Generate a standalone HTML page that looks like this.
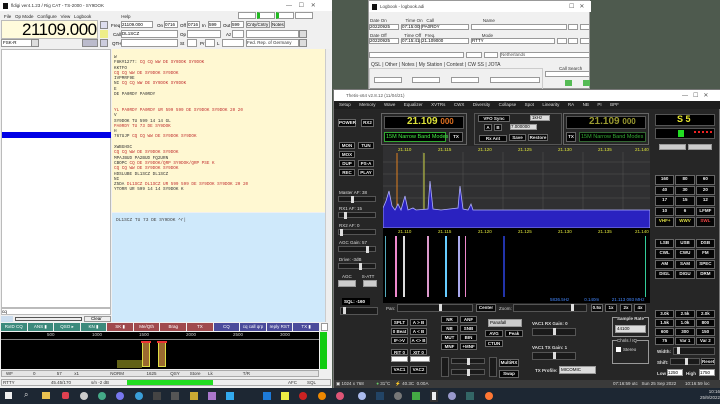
<!DOCTYPE html>
<html><head><meta charset="utf-8">
<style>
*{margin:0;padding:0;box-sizing:border-box}
body{width:720px;height:404px;overflow:hidden;background:#4e5a4e;font-family:"Liberation Sans",sans-serif;position:relative}
.a{position:absolute}
.t{font-size:4.5px;white-space:nowrap}
.f{position:absolute;background:#fff;border:1px solid #999}
.b{position:absolute;background:#050505;border:1px solid #666;color:#eee;font-size:4.5px;font-weight:bold;text-align:center;line-height:6px}
.sl{position:absolute;background:#1a1a1a;border:1px solid #555;height:6px}
.sl i{position:absolute;top:-1px;width:3px;height:7px;background:#ddd}
.rx div{height:5.3px;line-height:5.3px;font-size:4.3px;white-space:nowrap;font-family:"Liberation Mono",monospace}
.r{color:#c03030}
.mac{position:absolute;top:323px;left:1px;width:318px;height:8px;display:flex;gap:1px}
.mac div{flex:1;color:#fff;font-size:4.5px;line-height:8px;text-align:center;white-space:nowrap}
.g{background:#3c8a7c}.rd{background:#a04a4e}.bl{background:#4b4b9b}
</style></head><body>

<!-- fldigi window -->
<div class="a" style="left:0;top:0;width:332px;height:388px;background:#f0f0f0">
 <div class="a" style="left:0;top:0;width:332px;height:11px;background:#fff"></div>
 <div class="a" style="left:3px;top:3px;width:5px;height:6px;background:#111"></div>
 <div class="a t" style="left:11px;top:3px;color:#333">fldigi ver4.1.23 / Rig CAT - TS-2000 - SY9DOK</div>
 <div class="a t" style="left:286px;top:2px;font-size:6px;color:#555">—&nbsp;&nbsp;&nbsp;&nbsp;☐&nbsp;&nbsp;&nbsp;&nbsp;✕</div>
 <div class="a t" style="left:4px;top:14px;color:#222">File&nbsp;&nbsp;&nbsp;Op Mode&nbsp;&nbsp;&nbsp;Configure&nbsp;&nbsp;&nbsp;View&nbsp;&nbsp;&nbsp;Logbook&nbsp;&nbsp;&nbsp;&nbsp;&nbsp;&nbsp;&nbsp;&nbsp;&nbsp;&nbsp;&nbsp;&nbsp;&nbsp;&nbsp;&nbsp;&nbsp;&nbsp;&nbsp;&nbsp;&nbsp;&nbsp;&nbsp;&nbsp;&nbsp;Help</div>
 <div class="f" style="left:238px;top:12px;width:18px;height:7px"></div>
 <div class="f" style="left:257px;top:12px;width:18px;height:7px;border-left:3px solid #2b2"></div>
 <div class="f" style="left:276px;top:12px;width:18px;height:7px;border-left:3px solid #2b2"></div>
 <div class="f" style="left:295px;top:12px;width:18px;height:7px"></div>
 <div class="a" style="left:1px;top:20px;width:97px;height:19px;background:#fffbdc;border:1px solid #bbb"></div>
 <div class="a" style="left:22px;top:20px;font-size:17px;color:#000;letter-spacing:-0.5px">21109.000</div>
 <div class="f" style="left:1px;top:39px;width:38px;height:8px"></div><div class="a t" style="left:3px;top:40px">FSK-R</div>
 <div class="a" style="left:31px;top:39px;width:8px;height:8px;background:#ddd;border:1px solid #888"></div>
 <div class="a" style="left:100px;top:21px;width:8px;height:8px;background:#dde;border:1px solid #888"></div>
 <div class="a" style="left:100px;top:30px;width:8px;height:8px;background:#ee8"></div>
 <div class="a" style="left:100px;top:39px;width:8px;height:8px;background:#ccd;border:1px solid #888"></div>
 <div class="a" style="left:82px;top:39px;width:16px;height:8px;background:#bbc;border:1px solid #888"></div>
 <div class="a t" style="left:111px;top:23px">Freq</div><div class="f" style="left:121px;top:21px;width:32px;height:7px"></div><div class="a t" style="left:122px;top:22px">21109.000</div>
 <div class="a t" style="left:157px;top:23px">On</div><div class="f" style="left:164px;top:21px;width:14px;height:7px"></div><div class="a t" style="left:165px;top:22px">0716</div>
 <div class="a t" style="left:180px;top:23px">Off</div><div class="f" style="left:187px;top:21px;width:13px;height:7px"></div><div class="a t" style="left:188px;top:22px">0716</div>
 <div class="a t" style="left:202px;top:23px">In</div><div class="f" style="left:208px;top:21px;width:13px;height:7px"></div><div class="a t" style="left:209px;top:22px">599</div>
 <div class="a t" style="left:223px;top:23px">Out</div><div class="f" style="left:231px;top:21px;width:13px;height:7px"></div><div class="a t" style="left:232px;top:22px">599</div>
 <div class="f" style="left:246px;top:21px;width:24px;height:7px;background:#eee"></div><div class="a t" style="left:247px;top:22px">Cnty/Cntry</div>
 <div class="f" style="left:271px;top:21px;width:14px;height:7px;background:#eee"></div><div class="a t" style="left:272px;top:22px">Notes</div>
 <div class="a t" style="left:113px;top:32px">Call</div><div class="f" style="left:121px;top:30px;width:57px;height:8px"></div><div class="a t" style="left:122px;top:31px">DL1SCZ</div>
 <div class="a t" style="left:180px;top:32px">Op</div><div class="f" style="left:187px;top:30px;width:34px;height:8px"></div>
 <div class="a t" style="left:226px;top:32px">Az</div><div class="f" style="left:232px;top:30px;width:12px;height:8px"></div>
 <div class="f" style="left:246px;top:30px;width:53px;height:8px"></div><div class="a" style="left:299px;top:30px;width:8px;height:8px;background:#ddd;border:1px solid #888"></div>
 <div class="a t" style="left:112px;top:41px">QTH</div><div class="f" style="left:121px;top:39px;width:57px;height:8px"></div>
 <div class="a t" style="left:180px;top:41px">St</div><div class="f" style="left:187px;top:39px;width:10px;height:8px"></div>
 <div class="a t" style="left:200px;top:41px">Pr</div><div class="f" style="left:205px;top:39px;width:10px;height:8px"></div>
 <div class="a t" style="left:217px;top:41px">L</div><div class="f" style="left:222px;top:39px;width:22px;height:8px"></div>
 <div class="f" style="left:246px;top:39px;width:53px;height:8px"></div><div class="a t" style="left:247px;top:40px;color:#333">Fed. Rep. of Germany</div><div class="a" style="left:299px;top:39px;width:8px;height:8px;background:#ddd;border:1px solid #888"></div>
 <!-- left panel -->
 <div class="a" style="left:1px;top:49px;width:110px;height:259px;background:#fff;border:1px solid #bbb"></div>
 <div class="a" style="left:2px;top:132px;width:109px;height:6px;background:#0000e6"></div>
 <div class="a" style="left:1px;top:308px;width:110px;height:7px;background:#fff;border:1px solid #bbb"></div><div class="a t" style="left:2px;top:309px">cq</div>
 <div class="a" style="left:1px;top:316px;width:12px;height:6px;background:#cde"></div>
 <div class="a" style="left:15px;top:317px;width:67px;height:4px;background:#eee;border:1px solid #555"></div>
 <div class="f" style="left:84px;top:316px;width:27px;height:6px;background:#eee"></div><div class="a t" style="left:91px;top:316px">Clear</div>
 <!-- RX text -->
 <div class="a rx" style="left:112px;top:49px;width:213px;height:163px;background:#fff8d2;padding:6px 1px 0 2px;color:#333">
  <div>W</div><div>F8K#1277: <span class="r">CQ CQ  WW  DE SY9DOK SY9DOK</span></div><div>KKTFO</div>
  <div class="r"> CQ CQ  WW  DE SY9DOK SY9DOK</div><div>IVPMRF9E</div><div>NI <span class="r">CQ CQ  WW  DE SY9DOK SY9DOK</span></div><div>E</div><div>DE PA0RDY PA0RDY</div><div>&nbsp;</div><div>&nbsp;</div>
  <div class="r">YL  PA0RDY  PA0RDY UR 599 599  DE SY9DOK SY9DOK 20 20</div><div>V</div><div>SY9DOK TU 599 14 14 GL</div><div class="r"> PA0RDY TU 73 DE SY9DOK</div><div>H</div>
  <div>767UJP  <span class="r">CQ CQ  WW  DE SY9DOK SY9DOK</span></div><div>&nbsp;</div><div>XWBGHSC</div><div class="r"> CQ CQ  WW  DE SY9DOK SY9DOK</div><div>MPAJBUD PA2BUD FQ2URN</div>
  <div>CBOPC <span class="r">CQ DE SY9DOK/QRP SY9DOK/QRP  PSE K</span></div><div class="r"> CQ CQ  WW  DE SY9DOK SY9DOK</div><div>HDSLUBE DL1SCZ DL1SCZ</div><div>NI</div>
  <div>Z5DA  <span class="r">DL1SCZ  DL1SCZ UR 599 599  DE SY9DOK SY9DOK 20 20</span></div><div>YTORR UR 599 14 14  SY9DOK K</div>
 </div>
 <div class="a" style="left:112px;top:213px;width:213px;height:109px;background:#cfe9fb"></div>
 <div class="a t" style="left:116px;top:218px;color:#444;font-family:'Liberation Mono',monospace">DL1SCZ TU 73 DE SY9DOK ^r|</div>
 <div class="a" style="left:325px;top:49px;width:6px;height:273px;background:#eee;border-left:1px solid #ccc"></div>
 <!-- macros -->
 <div class="mac">
  <div class="g">RxID CQ</div><div class="g">ANS ▮</div><div class="g">QSO ▸</div><div class="g">KN ▮</div>
  <div class="rd">SK ▮</div><div class="rd">Me/Qth</div><div class="rd">Brag</div><div class="rd">TX</div>
  <div class="bl">CQ</div><div class="bl">cq call qrp</div><div class="bl">reply RST</div><div class="bl">TX ▮</div>
 </div>
 <div class="f" style="left:321px;top:323px;width:7px;height:8px"></div>
 <!-- waterfall -->
 <div class="a" style="left:1px;top:332px;width:318px;height:8px;background:#000;border-bottom:1px solid #888"></div>
 <div class="a t" style="left:47px;top:332px;color:#ccc">500</div>
 <div class="a t" style="left:92px;top:332px;color:#ccc">1000</div>
 <div class="a t" style="left:139px;top:332px;color:#ccc">1500</div>
 <div class="a t" style="left:186px;top:332px;color:#ccc">2000</div>
 <div class="a t" style="left:233px;top:332px;color:#ccc">2500</div>
 <div class="a t" style="left:280px;top:332px;color:#ccc">3000</div>
 <div class="a" style="left:1px;top:340px;width:318px;height:29px;background:#000"></div>
 <div class="a" style="left:117px;top:360px;width:25px;height:8px;background:#8a8a20;opacity:.7"></div>
 <div class="a" style="left:142px;top:342px;width:8px;height:25px;background:#9a6a30;border:1px solid #dd4"></div>
 <div class="a" style="left:158px;top:342px;width:8px;height:25px;background:#9a6a30;border:1px solid #dd4"></div>
 <div class="a" style="left:141px;top:341px;width:10px;height:2px;background:#e33"></div>
 <div class="a" style="left:157px;top:341px;width:10px;height:2px;background:#e33"></div>
 <div class="a" style="left:320px;top:332px;width:7px;height:37px;background:#1c1"></div>
 <div class="a" style="left:1px;top:370px;width:318px;height:7px;background:#e4e4e4;border:1px solid #aaa"></div>
 <div class="a t" style="left:6px;top:371px;color:#333">WF&nbsp;&nbsp;&nbsp;&nbsp;&nbsp;&nbsp;&nbsp;&nbsp;&nbsp;&nbsp;&nbsp;&nbsp;&nbsp;&nbsp;&nbsp;&nbsp;0&nbsp;&nbsp;&nbsp;&nbsp;&nbsp;&nbsp;&nbsp;&nbsp;&nbsp;&nbsp;&nbsp;&nbsp;&nbsp;&nbsp;&nbsp;&nbsp;&nbsp;57&nbsp;&nbsp;&nbsp;&nbsp;&nbsp;&nbsp;&nbsp;&nbsp;&nbsp;&nbsp;x1&nbsp;&nbsp;&nbsp;&nbsp;&nbsp;&nbsp;&nbsp;&nbsp;&nbsp;&nbsp;&nbsp;&nbsp;&nbsp;&nbsp;&nbsp;&nbsp;&nbsp;&nbsp;&nbsp;&nbsp;&nbsp;&nbsp;&nbsp;&nbsp;&nbsp;NORM&nbsp;&nbsp;&nbsp;&nbsp;&nbsp;&nbsp;&nbsp;&nbsp;&nbsp;&nbsp;&nbsp;&nbsp;&nbsp;&nbsp;&nbsp;&nbsp;&nbsp;&nbsp;1625&nbsp;&nbsp;&nbsp;&nbsp;&nbsp;&nbsp;&nbsp;&nbsp;&nbsp;&nbsp;&nbsp;QSY&nbsp;&nbsp;&nbsp;&nbsp;&nbsp;&nbsp;&nbsp;&nbsp;Store&nbsp;&nbsp;&nbsp;&nbsp;&nbsp;&nbsp;Lk&nbsp;&nbsp;&nbsp;&nbsp;&nbsp;&nbsp;&nbsp;&nbsp;&nbsp;&nbsp;&nbsp;&nbsp;&nbsp;&nbsp;&nbsp;&nbsp;&nbsp;&nbsp;&nbsp;&nbsp;&nbsp;&nbsp;&nbsp;&nbsp;T/R</div>
 <div class="a" style="left:1px;top:379px;width:330px;height:7px;background:#eee;border:1px solid #aaa"></div>
 <div class="a t" style="left:3px;top:380px;color:#333">RTTY&nbsp;&nbsp;&nbsp;&nbsp;&nbsp;&nbsp;&nbsp;&nbsp;&nbsp;&nbsp;&nbsp;&nbsp;&nbsp;&nbsp;&nbsp;&nbsp;&nbsp;&nbsp;&nbsp;&nbsp;&nbsp;&nbsp;&nbsp;&nbsp;&nbsp;&nbsp;&nbsp;&nbsp;&nbsp;45.45/170&nbsp;&nbsp;&nbsp;&nbsp;&nbsp;&nbsp;&nbsp;&nbsp;&nbsp;&nbsp;&nbsp;&nbsp;&nbsp;&nbsp;&nbsp;&nbsp;s/n -2 dB</div>
 <div class="a" style="left:127px;top:380px;width:86px;height:5px;background:#2d2"></div>
 <div class="a t" style="left:288px;top:380px;color:#333">AFC&nbsp;&nbsp;&nbsp;&nbsp;&nbsp;&nbsp;&nbsp;&nbsp;SQL</div>
</div>

<!-- Logbook -->
<div class="a" style="left:368px;top:0;width:222px;height:89px;background:#f0f0f0;border:1px solid #999">
 <div class="a" style="left:0;top:0;width:222px;height:11px;background:#fff"></div>
 <div class="a" style="left:3px;top:3px;width:5px;height:6px;background:#111"></div>
 <div class="a t" style="left:11px;top:3px;color:#444">Logbook - logbook.adi</div>
 <div class="a t" style="left:200px;top:2px;font-size:6px;color:#555">☐&nbsp;&nbsp;&nbsp;✕</div>
 <div class="a t" style="left:1px;top:17px;color:#333">Date On&nbsp;&nbsp;&nbsp;&nbsp;&nbsp;&nbsp;&nbsp;&nbsp;&nbsp;&nbsp;&nbsp;&nbsp;&nbsp;&nbsp;&nbsp;Time On&nbsp;&nbsp;&nbsp;Call&nbsp;&nbsp;&nbsp;&nbsp;&nbsp;&nbsp;&nbsp;&nbsp;&nbsp;&nbsp;&nbsp;&nbsp;&nbsp;&nbsp;&nbsp;&nbsp;&nbsp;&nbsp;&nbsp;&nbsp;&nbsp;&nbsp;&nbsp;&nbsp;&nbsp;&nbsp;&nbsp;&nbsp;&nbsp;&nbsp;&nbsp;&nbsp;&nbsp;&nbsp;&nbsp;&nbsp;&nbsp;&nbsp;&nbsp;Name</div>
 <div class="f" style="left:0;top:23px;width:30px;height:6px"></div><div class="a t" style="left:1px;top:23px">20220925</div>
 <div class="f" style="left:32px;top:23px;width:19px;height:6px"></div><div class="a t" style="left:33px;top:23px">07:15:00</div>
 <div class="f" style="left:52px;top:23px;width:48px;height:6px"></div><div class="a t" style="left:53px;top:23px">PA0RDY</div>
 <div class="f" style="left:102px;top:23px;width:96px;height:6px"></div>
 <div class="f" style="left:199px;top:23px;width:10px;height:6px"></div><div class="f" style="left:211px;top:23px;width:10px;height:6px"></div>
 <div class="a t" style="left:1px;top:32px;color:#333">Date Off&nbsp;&nbsp;&nbsp;&nbsp;&nbsp;&nbsp;&nbsp;&nbsp;&nbsp;&nbsp;&nbsp;&nbsp;&nbsp;&nbsp;Time Off&nbsp;&nbsp;&nbsp;Freq.&nbsp;&nbsp;&nbsp;&nbsp;&nbsp;&nbsp;&nbsp;&nbsp;&nbsp;&nbsp;&nbsp;&nbsp;&nbsp;&nbsp;&nbsp;&nbsp;&nbsp;&nbsp;&nbsp;&nbsp;&nbsp;&nbsp;&nbsp;&nbsp;&nbsp;&nbsp;&nbsp;&nbsp;&nbsp;&nbsp;&nbsp;&nbsp;&nbsp;&nbsp;&nbsp;&nbsp;&nbsp;Mode</div>
 <div class="f" style="left:0;top:37px;width:30px;height:6px"></div><div class="a t" style="left:1px;top:37px">20220925</div>
 <div class="f" style="left:32px;top:37px;width:19px;height:6px"></div><div class="a t" style="left:33px;top:37px">07:15:41</div>
 <div class="f" style="left:52px;top:37px;width:48px;height:6px"></div><div class="a t" style="left:53px;top:37px">21.109000</div>
 <div class="f" style="left:102px;top:37px;width:84px;height:6px"></div><div class="a t" style="left:103px;top:37px">RTTY</div>
 <div class="f" style="left:188px;top:37px;width:10px;height:6px"></div><div class="f" style="left:199px;top:37px;width:10px;height:6px"></div><div class="f" style="left:211px;top:37px;width:10px;height:6px"></div>
 <div class="f" style="left:0;top:51px;width:95px;height:6px"></div><div class="f" style="left:97px;top:51px;width:16px;height:6px"></div><div class="f" style="left:115px;top:51px;width:14px;height:6px"></div>
 <div class="f" style="left:131px;top:51px;width:90px;height:6px"></div><div class="a t" style="left:132px;top:51px;color:#555">Netherlands</div>
 <div class="a t" style="left:2px;top:61px;font-size:5px;color:#333">QSL | Other | Notes | My Station | Contest | CW SS | JOTA</div>
 <div class="a" style="left:0;top:67px;width:174px;height:22px;border:1px solid #ccc"></div>
 <div class="f" style="left:5px;top:76px;width:28px;height:6px"></div><div class="f" style="left:43px;top:76px;width:28px;height:6px"></div><div class="f" style="left:82px;top:76px;width:28px;height:6px"></div><div class="f" style="left:121px;top:76px;width:50px;height:6px"></div>
 <div class="a t" style="left:190px;top:65px;color:#333">Call Search</div>
 <div class="f" style="left:176px;top:70px;width:45px;height:6px"></div>
 <div class="a" style="left:196px;top:79px;width:7px;height:6px;background:#5b5"></div><div class="a" style="left:214px;top:79px;width:7px;height:6px;background:#5b5"></div>
</div>

<!-- Thetis -->
<div class="a" style="left:333px;top:89px;width:387px;height:299px;background:#262626;border:1px solid #777">
 <div class="a" style="left:0;top:0;width:387px;height:11px;background:#fff"></div>
 <div class="a t" style="left:12px;top:3px;color:#555">Thetis-x64 v2.8.12 (11/04/21)</div>
 <div class="a t" style="left:348px;top:2px;font-size:6px;color:#555">—&nbsp;&nbsp;&nbsp;☐&nbsp;&nbsp;&nbsp;✕</div>
 <div class="a" style="left:0;top:11px;width:387px;height:8px;background:#1e1e1e"></div>
 <div class="a t" style="left:5px;top:12px;color:#ddd;word-spacing:3px">Setup&nbsp;&nbsp;Memory&nbsp;&nbsp;Wave&nbsp;&nbsp;Equalizer&nbsp;&nbsp;XVTRs&nbsp;&nbsp;CWX&nbsp;&nbsp;Diversity&nbsp;&nbsp;Collapse&nbsp;&nbsp;Spot&nbsp;&nbsp;Linearity&nbsp;&nbsp;RA&nbsp;&nbsp;NB&nbsp;&nbsp;PI&nbsp;&nbsp;BPF</div>
 <!-- VFO A -->
 <div class="a" style="left:47px;top:23px;width:86px;height:32px;border:1px solid #666"></div>
 <div class="a" style="left:50px;top:26px;width:80px;height:13px;background:#000;border:1px solid #555"></div>
 <div class="a" style="left:73px;top:26px;font-size:10px;font-weight:bold;color:#dde23a">21.109 <span style="color:#e07020;font-size:8px">000</span></div>
 <div class="a" style="left:50px;top:42px;width:62px;height:10px;background:#000;border:1px solid #3a3"></div>
 <div class="a t" style="left:52px;top:44px;color:#4e4;font-size:5.5px">15M Narrow Band Modes</div>
 <div class="b" style="left:115px;top:42px;width:14px;height:10px;line-height:8px">TX</div>
 <!-- center -->
 <div class="a" style="left:140px;top:23px;width:88px;height:32px;border:1px solid #555"></div>
 <div class="b" style="left:144px;top:25px;width:32px;height:7px">VFO Sync</div>
 <div class="b" style="left:150px;top:34px;width:8px;height:7px">A</div><div class="b" style="left:160px;top:34px;width:8px;height:7px">B</div>
 <div class="f" style="left:176px;top:34px;width:27px;height:6px;background:#ddd"></div><div class="a t" style="left:177px;top:34px">7.000000</div>
 <div class="f" style="left:196px;top:25px;width:20px;height:6px;background:#ddd"></div><div class="a t" style="left:198px;top:25px">1kHz</div>
 <div class="b" style="left:145px;top:45px;width:28px;height:7px">Rx Ant</div>
 <div class="b" style="left:175px;top:44px;width:17px;height:7px">Save</div><div class="b" style="left:194px;top:44px;width:20px;height:7px">Restore</div>
 <!-- VFO B -->
 <div class="a" style="left:229px;top:23px;width:86px;height:32px;border:1px solid #666"></div>
 <div class="a" style="left:232px;top:26px;width:80px;height:13px;background:#000;border:1px solid #555"></div>
 <div class="a" style="left:255px;top:26px;font-size:10px;font-weight:bold;color:#9a9a30">21.109 <span style="font-size:8px">000</span></div>
 <div class="b" style="left:232px;top:42px;width:10px;height:10px;line-height:8px">TX</div>
 <div class="a" style="left:245px;top:42px;width:67px;height:10px;background:#000;border:1px solid #363"></div>
 <div class="a t" style="left:247px;top:44px;color:#3a3;font-size:5.5px">15M Narrow Band Modes</div>
 <!-- meter -->
 <div class="a" style="left:321px;top:24px;width:60px;height:12px;background:#000;border:1px solid #555"></div>
 <div class="a" style="left:343px;top:24px;font-size:9px;font-weight:bold;color:#e8e830">S 5</div>
 <div class="a" style="left:321px;top:38px;width:60px;height:11px;background:#000;border:1px solid #555"></div>
 <div class="a" style="left:344px;top:40px;width:6px;height:7px;background:#2d2"></div>
 <div class="a" style="left:360px;top:41px;width:18px;height:4px;border-top:2px dotted #e22"></div>
 <div class="f" style="left:325px;top:54px;width:27px;height:6px;background:#ccc"></div><div class="f" style="left:354px;top:54px;width:24px;height:6px;background:#ccc"></div>
 <!-- left buttons -->
 <div class="b" style="left:4px;top:29px;width:18px;height:8px">POWER</div>
 <div class="b" style="left:27px;top:29px;width:13px;height:8px">RX2</div>
 <div class="b" style="left:5px;top:52px;width:16px;height:7px">MON</div><div class="b" style="left:24px;top:52px;width:16px;height:7px">TUN</div>
 <div class="b" style="left:5px;top:61px;width:16px;height:7px">MOX</div>
 <div class="b" style="left:5px;top:70px;width:16px;height:7px">DUP</div><div class="b" style="left:24px;top:70px;width:16px;height:7px">PS-A</div>
 <div class="b" style="left:5px;top:79px;width:16px;height:7px">REC</div><div class="b" style="left:24px;top:79px;width:16px;height:7px">PLAY</div>
 <div class="a t" style="left:5px;top:100px;color:#ddd">Master AF: 38</div><div class="sl" style="left:4px;top:106px;width:38px"><i style="left:12px"></i></div>
 <div class="a t" style="left:5px;top:116px;color:#ddd">RX1 AF: 15</div><div class="sl" style="left:4px;top:122px;width:38px"><i style="left:5px"></i></div>
 <div class="a t" style="left:5px;top:133px;color:#ddd">RX2 AF: 0</div><div class="sl" style="left:4px;top:139px;width:38px"><i style="left:1px"></i></div>
 <div class="a t" style="left:5px;top:150px;color:#ddd">AGC Gain: 57</div><div class="sl" style="left:4px;top:156px;width:38px"><i style="left:27px"></i></div>
 <div class="a t" style="left:5px;top:167px;color:#ddd">Drive: -3dB</div><div class="sl" style="left:4px;top:173px;width:38px"><i style="left:20px"></i></div>
 <div class="a t" style="left:8px;top:184px;color:#ddd">AGC&nbsp;&nbsp;&nbsp;&nbsp;&nbsp;&nbsp;&nbsp;&nbsp;S-ATT</div>
 <div class="f" style="left:4px;top:190px;width:18px;height:7px;background:#ccc"></div><div class="f" style="left:29px;top:190px;width:14px;height:7px;background:#ccc"></div>
 <div class="a" style="left:8px;top:208px;width:28px;height:7px;background:#000"></div><div class="a t" style="left:10px;top:209px;color:#fff;font-weight:bold">SQL: -160</div>
 <div class="sl" style="left:6px;top:217px;width:38px;height:8px"><i style="left:2px"></i></div>
 <!-- spectrum -->
 <svg class="a" style="left:49px;top:56px" width="267" height="82" viewBox="0 0 267 82">
  <rect width="267" height="82" fill="#303032"/>
  <g stroke="#555" stroke-width="0.5">
   <line x1="0" y1="16" x2="267" y2="16"/><line x1="0" y1="28" x2="267" y2="28"/><line x1="0" y1="40" x2="267" y2="40"/><line x1="0" y1="52" x2="267" y2="52"/><line x1="0" y1="64" x2="267" y2="64"/>
   <line x1="40" y1="6" x2="40" y2="82"/><line x1="80" y1="6" x2="80" y2="82"/><line x1="120" y1="6" x2="120" y2="82"/><line x1="160" y1="6" x2="160" y2="82"/><line x1="200" y1="6" x2="200" y2="82"/><line x1="240" y1="6" x2="240" y2="82"/>
  </g>
  <g fill="#dde23a" font-size="4.5" font-family="Liberation Sans"><text x="15" y="5">21.110</text><text x="55" y="5">21.115</text><text x="95" y="5">21.120</text><text x="135" y="5">21.125</text><text x="175" y="5">21.130</text><text x="215" y="5">21.135</text><text x="252" y="5">21.140</text></g>
  <line x1="14" y1="7" x2="14" y2="82" stroke="#e08020"/><line x1="41" y1="7" x2="41" y2="82" stroke="#c8d040"/>
  <path d="M0 62 L3 55 L6 45 L9 60 L12 64 L15 58 L18 64 L22 50 L25 64 L30 62 L33 64 L45 63 L47 35 L50 63 L58 64 L75 62 L77 40 L80 63 L85 64 L88 58 L90 64 L267 64 L267 82 L0 82Z" fill="#2a22c0" stroke="#b0b0ff" stroke-width="0.8"/>
 </svg>
 <div class="a" style="left:49px;top:138px;width:267px;height:8px;background:#000"></div>
 <div class="a t" style="left:64px;top:139px;color:#dde23a">21.110</div>
 <div class="a t" style="left:104px;top:139px;color:#dde23a">21.115</div>
 <div class="a t" style="left:144px;top:139px;color:#dde23a">21.120</div>
 <div class="a t" style="left:184px;top:139px;color:#dde23a">21.125</div>
 <div class="a t" style="left:224px;top:139px;color:#dde23a">21.130</div>
 <div class="a t" style="left:264px;top:139px;color:#dde23a">21.135</div>
 <div class="a t" style="left:301px;top:139px;color:#dde23a">21.140</div>
 <div class="a" style="left:49px;top:146px;width:267px;height:61px;background:#000;background-image:linear-gradient(90deg,transparent 2px,#5ab 2px,#5ab 3px,transparent 3px,transparent 12px,#e8c 12px,#e8c 14px,transparent 14px,transparent 20px,#ddd 20px,#ddd 22px,transparent 22px,transparent 44px,#d9c 44px,#d9c 46px,transparent 46px,transparent 62px,#6cf 62px,#6cf 64px,transparent 64px,transparent 75px,#aae 75px,#aae 77px,transparent 77px,transparent 82px,#e8c 82px,#e8c 83px,transparent 83px,transparent 120px,#23a 120px,#23a 122px,transparent 122px,transparent 262px,#3c9 262px,#3c9 263px,transparent 263px)"></div>
 <div class="a" style="left:49px;top:207px;width:267px;height:6px;background:#000"></div>
 <div class="a t" style="left:216px;top:207px;color:#48f">5836.5Hz&nbsp;&nbsp;&nbsp;&nbsp;&nbsp;&nbsp;&nbsp;&nbsp;&nbsp;&nbsp;&nbsp;&nbsp;0.140m&nbsp;&nbsp;&nbsp;&nbsp;&nbsp;&nbsp;&nbsp;&nbsp;&nbsp;&nbsp;21.113 093 MHz</div>
 <!-- pan zoom -->
 <div class="a t" style="left:52px;top:216px;color:#ccc">Pan:</div><div class="sl" style="left:63px;top:214px;width:76px;height:8px"><i style="left:41px"></i></div>
 <div class="b" style="left:142px;top:214px;width:20px;height:8px">Center</div>
 <div class="a t" style="left:165px;top:216px;color:#ccc">Zoom:</div><div class="sl" style="left:179px;top:214px;width:74px;height:8px"><i style="left:57px"></i></div>
 <div class="b" style="left:257px;top:214px;width:12px;height:8px">0.5x</div><div class="b" style="left:271px;top:214px;width:12px;height:8px">1x</div><div class="b" style="left:286px;top:214px;width:12px;height:8px">2x</div><div class="b" style="left:300px;top:214px;width:12px;height:8px">4x</div>
 <!-- lower controls -->
 <div class="b" style="left:57px;top:229px;width:17px;height:7px">SPLT</div><div class="b" style="left:76px;top:229px;width:17px;height:7px">A &gt; B</div>
 <div class="b" style="left:57px;top:238px;width:17px;height:7px">0 Beat</div><div class="b" style="left:76px;top:238px;width:17px;height:7px">A &lt; B</div>
 <div class="b" style="left:57px;top:247px;width:17px;height:7px">IF-&gt;V</div><div class="b" style="left:76px;top:247px;width:17px;height:7px">A &lt;&gt; B</div>
 <div class="b" style="left:57px;top:259px;width:17px;height:6px">RIT 0</div><div class="b" style="left:76px;top:259px;width:17px;height:6px">XIT 0</div>
 <div class="f" style="left:57px;top:266px;width:17px;height:6px"></div><div class="f" style="left:76px;top:266px;width:20px;height:6px"></div>
 <div class="b" style="left:57px;top:276px;width:17px;height:8px">VAC1</div><div class="b" style="left:76px;top:276px;width:17px;height:8px">VAC2</div>
 <div class="b" style="left:107px;top:226px;width:17px;height:7px">NR</div><div class="b" style="left:126px;top:226px;width:17px;height:7px">ANF</div>
 <div class="b" style="left:107px;top:235px;width:17px;height:7px">NB</div><div class="b" style="left:126px;top:235px;width:17px;height:7px">SNB</div>
 <div class="b" style="left:107px;top:244px;width:17px;height:7px">MUT</div><div class="b" style="left:126px;top:244px;width:17px;height:7px">BIN</div>
 <div class="b" style="left:107px;top:253px;width:17px;height:7px">MNF</div><div class="b" style="left:126px;top:253px;width:17px;height:7px">+MNF</div>
 <div class="sl" style="left:107px;top:267px;width:8px;height:20px"></div>
 <div class="sl" style="left:117px;top:268px;width:34px"><i style="left:15px"></i></div><div class="sl" style="left:117px;top:279px;width:34px"><i style="left:15px"></i></div>
 <div class="sl" style="left:155px;top:267px;width:8px;height:20px"></div>
 <div class="b" style="left:165px;top:269px;width:20px;height:8px">MultiRX</div><div class="b" style="left:165px;top:280px;width:20px;height:8px">Swap</div>
 <div class="f" style="left:154px;top:229px;width:34px;height:8px;background:#ccc"></div><div class="a t" style="left:156px;top:230px">Panafall</div>
 <div class="b" style="left:151px;top:240px;width:18px;height:7px">AVG</div><div class="b" style="left:171px;top:240px;width:18px;height:7px">Peak</div>
 <div class="b" style="left:151px;top:250px;width:18px;height:7px">CTUN</div>
 <div class="a t" style="left:198px;top:231px;color:#ddd;font-weight:bold">VAC1 RX Gain: 0</div><div class="sl" style="left:198px;top:238px;width:44px;height:8px"><i style="left:20px"></i></div>
 <div class="a t" style="left:198px;top:255px;color:#ddd;font-weight:bold">VAC1 TX Gain: 1</div><div class="sl" style="left:198px;top:262px;width:44px;height:8px"><i style="left:20px"></i></div>
 <div class="a t" style="left:201px;top:278px;color:#ddd;font-weight:bold">TX Profile:</div>
 <div class="f" style="left:225px;top:276px;width:37px;height:8px;background:#ddd"></div><div class="a t" style="left:227px;top:277px">MICOMIC</div>
 <div class="a" style="left:278px;top:227px;width:37px;height:20px;border:1px solid #999"></div>
 <div class="a t" style="left:283px;top:226px;color:#ddd;font-weight:bold;background:#262626">Sample Rate</div>
 <div class="f" style="left:281px;top:235px;width:31px;height:8px;background:#ddd"></div><div class="a t" style="left:283px;top:236px">44100</div>
 <div class="a" style="left:278px;top:250px;width:37px;height:24px;border:1px solid #999"></div>
 <div class="a t" style="left:283px;top:248px;color:#ddd;background:#262626">Chnls / IQ</div>
 <div class="a" style="left:282px;top:257px;width:5px;height:5px;background:#fff"></div><div class="a t" style="left:289px;top:257px;color:#ddd">Stereo</div>
 <!-- right band buttons -->
 <div class="a" style="left:321px;top:85px;width:60px;height:52px;display:grid;grid-template-columns:repeat(3,1fr);gap:1px 1px">
  <div class="b" style="position:static">160</div><div class="b" style="position:static">80</div><div class="b" style="position:static">60</div>
  <div class="b" style="position:static">40</div><div class="b" style="position:static">30</div><div class="b" style="position:static">20</div>
  <div class="b" style="position:static">17</div><div class="b" style="position:static">15</div><div class="b" style="position:static">12</div>
  <div class="b" style="position:static">10</div><div class="b" style="position:static">6</div><div class="b" style="position:static">LFMF</div>
  <div class="b" style="position:static;color:#dd4">VHF+</div><div class="b" style="position:static;color:#dd4">WWV</div><div class="b" style="position:static;color:#e44">SWL</div>
 </div>
 <div class="a" style="left:321px;top:149px;width:60px;height:40px;display:grid;grid-template-columns:repeat(3,1fr);gap:1px">
  <div class="b" style="position:static">LSB</div><div class="b" style="position:static">USB</div><div class="b" style="position:static">DSB</div>
  <div class="b" style="position:static">CWL</div><div class="b" style="position:static">CWU</div><div class="b" style="position:static">FM</div>
  <div class="b" style="position:static">AM</div><div class="b" style="position:static">SAM</div><div class="b" style="position:static">SPEC</div>
  <div class="b" style="position:static">DIGL</div><div class="b" style="position:static">DIGU</div><div class="b" style="position:static">DRM</div>
 </div>
 <div class="a" style="left:321px;top:220px;width:60px;height:34px;display:grid;grid-template-columns:repeat(3,1fr);gap:1px">
  <div class="b" style="position:static">3.0k</div><div class="b" style="position:static">2.5k</div><div class="b" style="position:static">2.0k</div>
  <div class="b" style="position:static">1.5k</div><div class="b" style="position:static">1.0k</div><div class="b" style="position:static">800</div>
  <div class="b" style="position:static">600</div><div class="b" style="position:static">300</div><div class="b" style="position:static">150</div>
  <div class="b" style="position:static">75</div><div class="b" style="position:static">Var 1</div><div class="b" style="position:static">Var 2</div>
 </div>
 <div class="a t" style="left:323px;top:259px;color:#ddd;font-weight:bold">Width:</div><div class="sl" style="left:339px;top:257px;width:42px;height:8px"><i style="left:3px"></i></div>
 <div class="a t" style="left:323px;top:270px;color:#ddd;font-weight:bold">Shift:</div><div class="sl" style="left:336px;top:268px;width:30px;height:7px"><i style="left:14px"></i></div>
 <div class="b" style="left:367px;top:268px;width:14px;height:7px">Reset</div>
 <div class="a t" style="left:323px;top:281px;color:#ddd;font-weight:bold">Low</div><div class="f" style="left:333px;top:279px;width:16px;height:7px"></div><div class="a t" style="left:334px;top:280px">1250</div>
 <div class="a t" style="left:352px;top:281px;color:#ddd;font-weight:bold">High</div><div class="f" style="left:365px;top:279px;width:16px;height:7px"></div><div class="a t" style="left:366px;top:280px">1750</div>
 <!-- status -->
 <div class="a" style="left:0;top:290px;width:387px;height:8px;background:#3a3a3a"></div>
 <div class="a t" style="left:2px;top:291px;color:#ddd">▣ 1024 x 768&nbsp;&nbsp;&nbsp;&nbsp;&nbsp;&nbsp;&nbsp;&nbsp;&nbsp;&nbsp;<span style="color:#6c6">●</span> 31°C&nbsp;&nbsp;&nbsp;&nbsp;<span style="color:#dd4">⚡</span> 40.3C&nbsp;&nbsp;0.00A</div>
 <div class="a t" style="left:279px;top:291px;color:#ddd">07:16:59 utc&nbsp;&nbsp;&nbsp;Sun 25 Sep 2022&nbsp;&nbsp;&nbsp;&nbsp;&nbsp;&nbsp;&nbsp;10:16:59 loc</div>
</div>

<!-- taskbar -->
<div class="a" style="left:0;top:388px;width:720px;height:16px;background:#1d2733"></div>
<div class="a" style="left:5px;top:392px;width:7px;height:7px;background:#eee"></div>
<div class="a t" style="left:24px;top:390px;font-size:8px;color:#ddd">⌕</div>
<div class="a" style="left:42px;top:392px;width:8px;height:7px;background:#e8c050"></div>
<div class="a" style="left:62px;top:392px;width:7px;height:7px;background:#e04050;border-radius:2px"></div>
<div class="a" style="left:80px;top:392px;width:8px;height:8px;background:#ccc;border-radius:50%"></div>
<div class="a" style="left:98px;top:392px;width:8px;height:8px;background:#4a8;border-radius:50%"></div>
<div class="a" style="left:116px;top:392px;width:8px;height:8px;background:#77e;border-radius:50%"></div>
<div class="a" style="left:135px;top:392px;width:8px;height:8px;background:#3a9ed8;border-radius:50%"></div>
<div class="a" style="left:153px;top:392px;width:8px;height:8px;background:#444"></div>
<div class="a" style="left:171px;top:392px;width:8px;height:8px;background:#555"></div>
<div class="a" style="left:190px;top:392px;width:8px;height:8px;background:#ca3"></div>
<div class="a" style="left:208px;top:392px;width:8px;height:8px;background:#a7c"></div>
<div class="a" style="left:226px;top:392px;width:8px;height:8px;background:#3ae"></div>
<div class="a" style="left:263px;top:392px;width:8px;height:8px;background:#1d7ad8"></div>
<div class="a" style="left:281px;top:392px;width:8px;height:8px;background:#ee4"></div>
<div class="a" style="left:299px;top:392px;width:8px;height:8px;background:#c22;border-radius:50%"></div>
<div class="a" style="left:318px;top:392px;width:8px;height:8px;background:#e80;border-radius:50%"></div>
<div class="a" style="left:336px;top:392px;width:8px;height:8px;background:#d57;border-radius:50%"></div>
<div class="a" style="left:358px;top:392px;width:8px;height:8px;background:#abe;border-radius:50%"></div>
<div class="a" style="left:376px;top:392px;width:8px;height:8px;background:#246"></div>
<div class="a" style="left:394px;top:392px;width:8px;height:8px;background:#777;border-radius:50%"></div>
<div class="a" style="left:412px;top:392px;width:8px;height:8px;background:#4a4"></div>
<div class="a" style="left:430px;top:390px;width:8px;height:12px;background:#eee;border:2px solid #333"></div>
<div class="a" style="left:448px;top:392px;width:8px;height:8px;background:#99c;border-radius:50%"></div>
<div class="a" style="left:466px;top:392px;width:8px;height:8px;background:#366"></div>
<div class="a" style="left:485px;top:392px;width:8px;height:8px;background:#f73;border-radius:50%"></div>
<div class="a t" style="left:700px;top:389px;color:#ddd;text-align:right;line-height:6px">10:16<br>25/9/2022</div>
</body></html>
